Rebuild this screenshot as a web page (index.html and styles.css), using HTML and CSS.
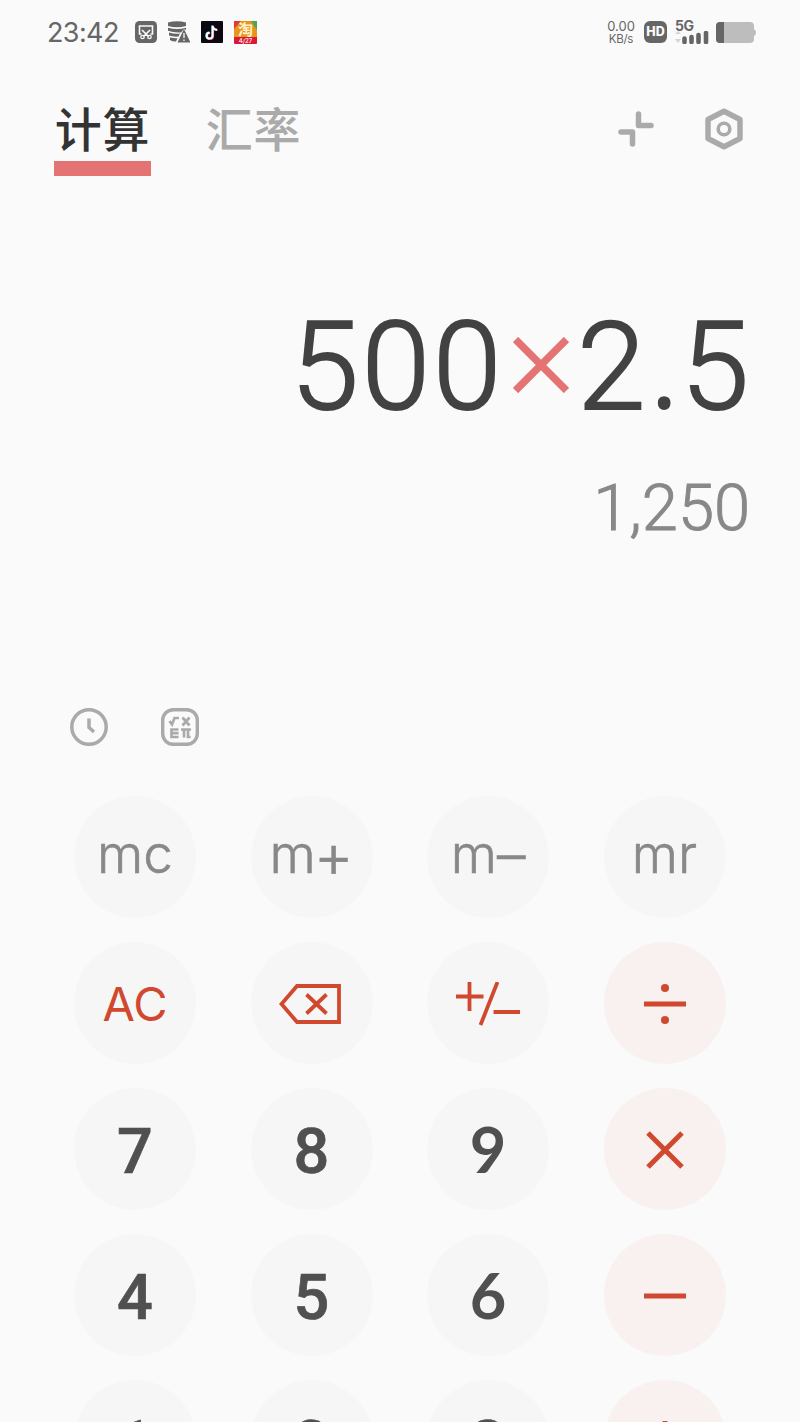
FILE: index.html
```html
<!DOCTYPE html>
<html lang="zh-CN">
<head>
<meta charset="utf-8">
<title>计算</title>
<link rel="stylesheet" href="styles.css">
</head>
<body>
<main class="screen">
  <header class="status">
    <span class="clock">23:42</span>
    <svg class="app-icon" viewBox="0 0 22 22"><rect width="22" height="22" rx="4.500" fill="#666"/><path d="M6.500 13H4.500V5h13v8h-2M7 9l6.500 6.500M15 9l-6.500 6.500" fill="none" stroke="#fafafa" stroke-width="1.600"/><circle cx="7.500" cy="16" r="1.700" fill="none" stroke="#fafafa" stroke-width="1.300"/><circle cx="14.500" cy="16" r="1.700" fill="none" stroke="#fafafa" stroke-width="1.300"/></svg>
    <svg class="app-icon" viewBox="0 0 22 22"><path d="M0 1.500Q9-1 18 1.500V5Q9 7.500 0 5zM0 6.700Q9 9.500 18 6.700V9l-2-1-3 3.500Q6 12 0 9.800zM1 11.500q6 1.800 11 1l-1.500 3Q5 16 1 14.500zM2 16.500q4 1 7.500.8L8 20.500q-4 0-6-1.500z" fill="#666"/><path d="M16 8 22.500 21.500H9.500z" fill="#666"/><path d="M16 12v5M16 18.500v1.500" stroke="#fafafa" stroke-width="1.300"/></svg>
    <svg class="app-icon" viewBox="0 0 22 22"><rect width="22" height="22" rx="1" fill="#0c0812"/><path d="M11.200 4.500v10a3 3 0 1 1-3-3M11.200 5q.8 3.500 4.800 3.700" fill="none" stroke="#56dce0" stroke-width="2"/><path d="M12.200 5v10a3 3 0 1 1-3-3M12.200 5.500q.8 3.500 4.300 3.700" fill="none" stroke="#f54871" stroke-width="1.800"/><path d="M11.700 4.700v10a3 3 0 1 1-3-3M11.700 5.200q.8 3.500 4.500 3.700" fill="none" stroke="#fff" stroke-width="1.800"/></svg>
    <svg class="app-icon shop" viewBox="0 0 23 23"><rect width="23" height="23" rx="1.500" fill="#e8951c"/><path d="M0 0h7L0 8z" fill="#dc3c36"/><path d="M17 0h6v9z" fill="#4aa65a"/><path d="M0 16h23v5.500a1.500 1.500 0 0 1-1.500 1.500h-20A1.500 1.500 0 0 1 0 21.500z" fill="#dc1738"/><text x="11.500" y="14" text-anchor="middle" class="shop-name">淘</text><text x="11.500" y="21.800" text-anchor="middle" class="shop-tag">4/27</text></svg>
    <div class="signals">
      <div class="speed"><span>0.00</span><span class="unit">KB/s</span></div>
      <span class="hd">HD</span>
      <div class="network"><span class="gen">5G</span>
        <svg class="bars" viewBox="0 0 34 13"><path d="M0 3 3 0l3 3zM0 8h6l-3 4z" fill="#d4d4d4"/><path d="M9.500 7.500v3.500M16.500 6v5M23.500 4v7M31 2v9" stroke="#666" stroke-width="4.600" stroke-linecap="round"/></svg></div>
      <svg class="battery" viewBox="0 0 40 21"><path d="M4 0h30q4 0 4 4v3q2 1 2 3.500T38 14v3q0 4-4 4H4q-4 0-4-4V4q0-4 4-4z" fill="#bdbdbd"/><path d="M8 0H4Q0 0 0 4v13q0 4 4 4h4z" fill="#666"/></svg>
    </div>
  </header>

  <nav class="tabs">
    <span class="tab active">计算</span>
    <span class="tab">汇率</span>
    <div class="actions">
      <svg class="shrink" viewBox="0 0 36 36"><path d="M20.500 3v11.500H33M3 21h11.500v12" fill="none" stroke="#aaa" stroke-width="5.500" stroke-linecap="round" stroke-linejoin="round"/></svg>
      <svg class="settings" viewBox="0 0 38 42"><path d="M19 3.200 35 11.500v19L19 38.800 3 30.500v-19z" fill="none" stroke="#aaa" stroke-width="5.500" stroke-linejoin="round"/><circle cx="19" cy="21" r="5.800" fill="none" stroke="#aaa" stroke-width="3.600"/></svg>
    </div>
  </nav>

  <section class="display">
    <div class="expression"><span>500</span><svg class="times" viewBox="0 0 56 56"><path d="m2.500 2.500 51 51m0-51-51 51" stroke="#e57373" stroke-width="7.500"/></svg><span>2<span class="dot">.</span>5</span></div>
    <div class="result">1,250</div>
  </section>

  <div class="tools">
    <svg class="tool" viewBox="0 0 38 38"><circle cx="19" cy="19" r="17.200" fill="none" stroke="#aaa" stroke-width="3.500"/><path d="M19 10.500v9l5 4.500" fill="none" stroke="#aaa" stroke-width="3.500"/></svg>
    <svg class="tool" viewBox="0 0 38 38"><rect x="1.700" y="1.700" width="34.600" height="34.600" rx="10.500" fill="none" stroke="#aaa" stroke-width="3.400"/><path d="m8.500 13 2.500 3.500 2.500-6.500H18M21.500 9.500l7 8m0-8-7 8M17.500 21.500h-7V29h7M10.500 25.200h7M20 21.500h10M23 21v8.500M27 21v8h2.500" fill="none" stroke="#aaa" stroke-width="2.700"/></svg>
  </div>

  <section class="keys">
    <div class="key memory">mc</div><div class="key memory">m<span class="plus">+</span></div><div class="key memory">m<span class="minus">–</span></div><div class="key memory">mr</div>
    <div class="key clear">AC</div>
    <div class="key"><svg class="erase" viewBox="0 0 62 40"><path d="M18 2h42v36H18L2.500 20zM27.500 10.500l20 19m0-19-20 19" fill="none" stroke="#d0492f" stroke-width="3.800"/></svg></div>
    <div class="key"><svg class="sign" viewBox="0 0 64 44"><path d="M0 14.500h27.500M13.500 0v29M41.500 0 24.500 43M37.500 30H64" fill="none" stroke="#d0492f" stroke-width="3.800"/></svg></div>
    <div class="key op"><svg class="mark" viewBox="0 0 42 42"><path d="M0 21h42" stroke="#d0492f" stroke-width="5"/><circle cx="21" cy="5" r="4" fill="#d0492f"/><circle cx="21" cy="37" r="4" fill="#d0492f"/></svg></div>
    <div class="key">7</div><div class="key">8</div><div class="key open">9</div>
    <div class="key op"><svg class="mark" viewBox="0 0 42 42"><path d="m4 4 34 34m0-34L4 38" stroke="#d0492f" stroke-width="5"/></svg></div>
    <div class="key">4</div><div class="key">5</div><div class="key open">6</div>
    <div class="key op"><svg class="mark" viewBox="0 0 42 42"><path d="M0 21h42" stroke="#d0492f" stroke-width="5"/></svg></div>
    <div class="key">1</div><div class="key">2</div><div class="key">3</div>
    <div class="key op"><svg class="mark" viewBox="0 0 42 42"><path d="M0 21h42M21 0v42" stroke="#d0492f" stroke-width="5"/></svg></div>
  </section>
</main>
</body>
</html>
```

FILE: styles.css
```css
* { box-sizing: border-box; }
body { margin: 0; background: #fafafa; }
svg { display: block; flex: none; }
.screen { width: 800px; height: 1422px; overflow: hidden; background: #fafafa; font-family: Roboto, "Noto Sans CJK SC", sans-serif; }

.status { height: 64px; padding: 0 44px 0 47px; display: flex; align-items: center; color: #666; }
.clock { width: 88px; font: 400 27px/30px Inter, sans-serif; letter-spacing: -.6px; padding-top: 2px; }
.app-icon { width: 22px; height: 22px; margin-right: 11px; }
.shop { width: 23px; height: 23px; }
.shop-name { font: 700 15px "Noto Sans CJK SC", sans-serif; fill: #fff4cf; }
.shop-tag { font: 700 6px Inter, sans-serif; fill: #ffd5d5; }
.signals { margin-left: auto; display: flex; align-items: center; }
.speed { display: flex; flex-direction: column; align-items: center; width: 30px; margin-right: 8px; font: 400 13px/13px Inter, sans-serif; }
.unit { font-size: 11.500px; line-height: 12px; letter-spacing: -.3px; }
.hd { width: 23px; height: 22px; border-radius: 6px; background: #666; color: #fafafa; font: 800 12.500px/22px Inter, sans-serif; text-align: center; margin-right: 8px; }
.network { width: 34px; margin-right: 7px; }
.gen { display: block; font: 700 14px/11px Inter, sans-serif; letter-spacing: -.5px; }
.bars { width: 34px; height: 13px; }
.battery { width: 40px; height: 21px; }

.tabs { height: 116px; padding: 33px 57px 0 54px; display: flex; align-items: flex-start; }
.tab { width: 97px; height: 79px; margin-right: 54px; font: 500 47px/60px "Noto Sans CJK SC", sans-serif; letter-spacing: .8px; color: #aaa; text-align: center; }
.active { color: #333; border-bottom: 15px solid #e57373; }
.actions { margin-left: auto; padding-top: 11px; display: flex; align-items: center; gap: 51px; }
.shrink { width: 36px; height: 36px; }
.settings { width: 38px; height: 42px; }

.display { height: 528px; padding: 122px 50px 0; color: #424242; }
.expression { height: 130px; display: flex; justify-content: flex-end; align-items: center; font-size: 123px; line-height: 130px; font-weight: 300; letter-spacing: 3px; -webkit-text-stroke: 2px #424242; }
.times { width: 56px; height: 56px; margin: -4px 8px 0 9px; }
.dot { font-family: "Noto Sans", sans-serif; font-size: 102px; font-weight: 400; line-height: 0; margin: 0 0 0 2px; -webkit-text-stroke-width: 0; }
.expression > span:last-child { margin-right: -2px; }
.result { margin-top: 38px; font-size: 65px; line-height: 76px; font-weight: 300; -webkit-text-stroke: 1px #888; color: #888; text-align: right; }

.tools { height: 88px; padding-left: 70px; display: flex; gap: 53px; }
.tool { width: 38px; height: 38px; }

.keys { padding-left: 74px; display: grid; grid-template-columns: repeat(4, 122px); grid-auto-rows: 122px; column-gap: 54.500px; row-gap: 24px; }
.key { display: flex; align-items: center; justify-content: center; padding-top: 2px; border-radius: 50%; background: #f6f6f6; color: #505050; font: 500 63px/120px Roboto, sans-serif; }
.key:nth-child(n+9) { padding-top: 6px; -webkit-text-stroke: .7px #505050; }
.key.memory { padding: 0 0 6px; color: #888; font: 300 53px/116px Inter, sans-serif; -webkit-text-stroke: .6px #888; }
.plus { font-size: 61px; margin: 1px 0 0 -2px; }
.minus { font-size: 57px; margin-top: 2px; }
.key.clear { padding-top: 2px; color: #d0492f; font: 400 47px/120px Inter, sans-serif; }
.key.open { padding-top: 0; font-family: Lato, sans-serif; font-weight: 700; -webkit-text-stroke-width: 0; }
.key.op { padding-top: 2px; background: #f8f1f0; }
.erase { width: 62px; height: 40px; margin-right: 4px; }
.sign { width: 64px; height: 44px; }
.mark { width: 42px; height: 42px; }
```
